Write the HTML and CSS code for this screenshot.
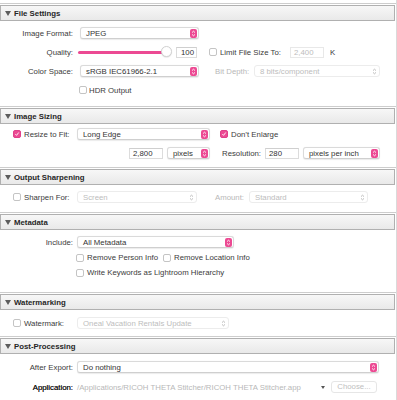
FILE: index.html
```html
<!DOCTYPE html>
<html lang="en">
<head>
    <meta charset="UTF-8">
    <title>Export Settings</title>
    <link rel="stylesheet" href="styles.css">
</head>
<body>
<div class="panel">

    <!-- File Settings -->
    <section class="section section--file">
        <div class="section__header"><span class="section__arrow"></span>File Settings</div>
        <div class="section__body">
            <div class="row">
                <span class="label">Image Format:</span>
                <div class="popup popup--format"><span>JPEG</span>
                    <svg class="stepper" viewBox="0 0 7 9"><rect width="7" height="9" rx="2"/><path d="M2 3.6 L3.5 2.2 L5 3.6 M2 5.4 L3.5 6.8 L5 5.4"/></svg>
                </div>
            </div>
            <div class="row">
                <span class="label">Quality:</span>
                <div class="slider"><div class="slider__track"></div><div class="slider__thumb"></div></div>
                <div class="field field--quality">100</div>
                <span class="check check--limit"></span>
                <span class="text text--limit">Limit File Size To:</span>
                <div class="field field--off field--limit">2,400</div>
                <span class="text">K</span>
            </div>
            <div class="row">
                <span class="label">Color Space:</span>
                <div class="popup popup--format"><span>sRGB IEC61966-2.1</span>
                    <svg class="stepper" viewBox="0 0 7 9"><rect width="7" height="9" rx="2"/><path d="M2 3.6 L3.5 2.2 L5 3.6 M2 5.4 L3.5 6.8 L5 5.4"/></svg>
                </div>
                <span class="text text--off text--depth">Bit Depth:</span>
                <div class="popup popup--off popup--depth"><span>8 bits/component</span>
                    <svg class="stepper stepper--off" viewBox="0 0 7 9"><rect width="7" height="9" rx="2"/><path d="M2 3.6 L3.5 2.2 L5 3.6 M2 5.4 L3.5 6.8 L5 5.4"/></svg>
                </div>
            </div>
            <div class="row">
                <span class="check check--hdr"></span>
                <span class="text">HDR Output</span>
            </div>
        </div>
    </section>

    <!-- Image Sizing -->
    <section class="section section--sizing">
        <div class="section__header"><span class="section__arrow"></span>Image Sizing</div>
        <div class="section__body">
            <div class="row">
                <span class="check check--on check--lead"><svg viewBox="0 0 8 8"><path d="M1.8 4.2 L3.4 5.8 L6.3 2"/></svg></span>
                <span class="text text--lead">Resize to Fit:</span>
                <div class="popup popup--edge"><span>Long Edge</span>
                    <svg class="stepper" viewBox="0 0 7 9"><rect width="7" height="9" rx="2"/><path d="M2 3.6 L3.5 2.2 L5 3.6 M2 5.4 L3.5 6.8 L5 5.4"/></svg>
                </div>
                <span class="check check--on check--enlarge"><svg viewBox="0 0 8 8"><path d="M1.8 4.2 L3.4 5.8 L6.3 2"/></svg></span>
                <span class="text">Don&rsquo;t Enlarge</span>
            </div>
            <div class="row">
                <div class="field field--size">2,800</div>
                <div class="popup popup--unit"><span>pixels</span>
                    <svg class="stepper" viewBox="0 0 7 9"><rect width="7" height="9" rx="2"/><path d="M2 3.6 L3.5 2.2 L5 3.6 M2 5.4 L3.5 6.8 L5 5.4"/></svg>
                </div>
                <span class="text text--res">Resolution:</span>
                <div class="field field--res">280</div>
                <div class="popup popup--ppi"><span>pixels per inch</span>
                    <svg class="stepper" viewBox="0 0 7 9"><rect width="7" height="9" rx="2"/><path d="M2 3.6 L3.5 2.2 L5 3.6 M2 5.4 L3.5 6.8 L5 5.4"/></svg>
                </div>
            </div>
        </div>
    </section>

    <!-- Output Sharpening -->
    <section class="section section--sharpen">
        <div class="section__header"><span class="section__arrow"></span>Output Sharpening</div>
        <div class="section__body">
            <div class="row">
                <span class="check check--lead"></span>
                <span class="text text--lead">Sharpen For:</span>
                <div class="popup popup--off popup--screen"><span>Screen</span>
                    <svg class="stepper stepper--off" viewBox="0 0 7 9"><rect width="7" height="9" rx="2"/><path d="M2 3.6 L3.5 2.2 L5 3.6 M2 5.4 L3.5 6.8 L5 5.4"/></svg>
                </div>
                <span class="text text--off text--amount">Amount:</span>
                <div class="popup popup--off popup--amount"><span>Standard</span>
                    <svg class="stepper stepper--off" viewBox="0 0 7 9"><rect width="7" height="9" rx="2"/><path d="M2 3.6 L3.5 2.2 L5 3.6 M2 5.4 L3.5 6.8 L5 5.4"/></svg>
                </div>
            </div>
        </div>
    </section>

    <!-- Metadata -->
    <section class="section section--meta">
        <div class="section__header"><span class="section__arrow"></span>Metadata</div>
        <div class="section__body">
            <div class="row">
                <span class="label">Include:</span>
                <div class="popup popup--include"><span>All Metadata</span>
                    <svg class="stepper" viewBox="0 0 7 9"><rect width="7" height="9" rx="2"/><path d="M2 3.6 L3.5 2.2 L5 3.6 M2 5.4 L3.5 6.8 L5 5.4"/></svg>
                </div>
            </div>
            <div class="row row--short">
                <span class="check check--meta"></span>
                <span class="text text--person">Remove Person Info</span>
                <span class="check"></span>
                <span class="text">Remove Location Info</span>
            </div>
            <div class="row row--short">
                <span class="check check--meta"></span>
                <span class="text">Write Keywords as Lightroom Hierarchy</span>
            </div>
        </div>
    </section>

    <!-- Watermarking -->
    <section class="section section--mark">
        <div class="section__header"><span class="section__arrow"></span>Watermarking</div>
        <div class="section__body">
            <div class="row">
                <span class="check check--lead"></span>
                <span class="text text--lead">Watermark:</span>
                <div class="popup popup--off popup--mark"><span>Oneal Vacation Rentals Update</span>
                    <svg class="stepper stepper--off" viewBox="0 0 7 9"><rect width="7" height="9" rx="2"/><path d="M2 3.6 L3.5 2.2 L5 3.6 M2 5.4 L3.5 6.8 L5 5.4"/></svg>
                </div>
            </div>
        </div>
    </section>

    <!-- Post-Processing -->
    <section class="section section--post">
        <div class="section__header"><span class="section__arrow"></span>Post-Processing</div>
        <div class="section__body">
            <div class="row">
                <span class="label">After Export:</span>
                <div class="popup popup--after"><span>Do nothing</span>
                    <svg class="stepper" viewBox="0 0 7 9"><rect width="7" height="9" rx="2"/><path d="M2 3.6 L3.5 2.2 L5 3.6 M2 5.4 L3.5 6.8 L5 5.4"/></svg>
                </div>
            </div>
            <div class="row">
                <span class="label label--strong">Application:</span>
                <span class="text text--off text--path">/Applications/RICOH THETA Stitcher/RICOH THETA Stitcher.app</span>
                <span class="drop-arrow"></span>
                <div class="button button--off">Choose...</div>
            </div>
        </div>
    </section>

</div>
</body>
</html>
```

FILE: styles.css
```css
body, html {
    margin: 0;
    background-color: #fff;
}

.panel {
    box-sizing: border-box;
    width: 397px;
    height: 400px;
    padding-top: 3px;
    border-right: 1px solid #dadada;
    font-family: "Liberation Sans", Arial, sans-serif;
    font-size: 7.8px;
    color: #3b3b3b;
    overflow: hidden;
}

.section {
    border-top: 1px solid #cdcdcd;
}

.section__header {
    display: flex;
    align-items: center;
    box-sizing: border-box;
    height: 16px;
    margin: 1px 1px 0 0;
    border: 1px solid #b0b0b0;
    background: linear-gradient(#f7f7f7, #e9e9e9);
    font-weight: bold;
    color: #262626;
}

.section__arrow {
    width: 0;
    height: 0;
    margin: 1px 3px 0 4px;
    border-left: 3.5px solid transparent;
    border-right: 3.5px solid transparent;
    border-top: 5px solid #5c5c5c;
}

.section__body {
    display: flex;
    flex-direction: column;
    gap: 3px;
}

.section--file .section__body { padding: 4px 0 8px; }
.section--sizing .section__body { padding: 2px 0 6px; }
.section--sharpen .section__body { padding: 4px 0 7px; }
.section--meta .section__body { padding: 4px 0 12px; gap: 0; }
.section--mark .section__body { padding: 5px 0 5px; }
.section--post .section__body { padding: 5px 0 5px; gap: 4px; }

.row {
    display: flex;
    align-items: center;
    height: 16px;
    white-space: nowrap;
}

.row--short {
    height: 15px;
}

.label {
    width: 73px;
    margin-right: 4px;
    text-align: right;
    flex-shrink: 0;
}

.section--file .label {
    margin-right: 7px;
}

.label--strong {
    color: #222;
    text-shadow: 0 0 0.3px #222;
}

.text {
    flex-shrink: 0;
}

.text--off {
    color: #b8b8b8;
}

/* popup buttons */
.popup {
    display: flex;
    align-items: center;
    justify-content: space-between;
    box-sizing: border-box;
    height: 12px;
    padding: 0 1px 0 5px;
    background-color: #fff;
    border: 1px solid #dadada;
    border-bottom-color: #cfcfcf;
    border-radius: 3px;
    box-shadow: 0 0.5px 1px rgba(0, 0, 0, 0.08);
    color: #333;
    flex-shrink: 0;
}

.popup--off {
    border-color: #ececec;
    box-shadow: none;
    color: #bdbdbd;
}

.stepper {
    width: 7px;
    height: 9px;
}

.stepper rect {
    fill: #ec4a93;
}

.stepper path {
    fill: none;
    stroke: #fff;
    stroke-width: 0.9;
}

.stepper--off rect {
    fill: none;
}

.stepper--off path {
    stroke: #b3b3b3;
}

.popup--format { width: 119px; }
.popup--depth { width: 126px; margin-left: 4px; }
.popup--edge { width: 133px; }
.popup--unit { width: 43px; margin-left: 4px; }
.popup--ppi { width: 77px; margin-left: 4px; }
.popup--screen { width: 120px; }
.popup--amount { width: 119px; margin-left: 4px; }
.popup--include { width: 157px; }
.popup--mark { width: 152px; }
.popup--after { width: 302px; }

/* text fields */
.field {
    box-sizing: border-box;
    height: 11px;
    line-height: 9px;
    padding: 0 3px;
    background-color: #fff;
    border: 1px solid #dcdcdc;
    border-top-color: #cfcfcf;
    color: #333;
    flex-shrink: 0;
}

.field--off {
    border-color: #e8e8e8;
    color: #bdbdbd;
}

.field--quality { width: 21px; margin-left: 4px; text-align: right; padding-right: 2px; }
.field--limit { width: 34px; margin-right: 6px; }
.field--size { width: 34px; margin-left: 129px; }
.field--res { width: 34px; }

/* checkboxes */
.check {
    display: flex;
    align-items: center;
    justify-content: center;
    box-sizing: border-box;
    width: 8px;
    height: 8px;
    margin-right: 3px;
    background-color: #fff;
    border: 1px solid #c4c4c4;
    border-radius: 2px;
    flex-shrink: 0;
}

.check--on {
    background-color: #ec4a93;
    border-color: #e0408a;
}

.check--on svg {
    width: 8px;
    height: 8px;
}

.check--on path {
    fill: none;
    stroke: #fff;
    stroke-width: 1.2;
}

.check--limit { margin-left: 12px; }
.check--hdr { margin-left: 79px; margin-right: 2px; }
.check--lead { margin-left: 13px; }
.check--enlarge { margin-left: 10px; }
.check--meta { margin-left: 76px; }

.text--lead { width: 49px; margin-right: 4px; }
.text--limit { width: 60px; margin-right: 10px; }
.text--depth { width: 35px; margin-left: 16px; }
.text--res { width: 38px; margin-left: 12px; margin-right: 5px; }
.text--amount { width: 30px; margin-left: 18px; }
.text--person { width: 69px; margin-right: 7px; }
.text--path { width: 244px; }

/* quality slider */
.slider {
    position: relative;
    width: 94px;
    height: 12px;
    margin-left: -2px;
    flex-shrink: 0;
}

.slider__track {
    position: absolute;
    left: 0;
    right: 6px;
    top: 5px;
    height: 3px;
    border-radius: 2px;
    background-color: #ec4a93;
}

.slider__thumb {
    position: absolute;
    right: 0;
    top: 0;
    box-sizing: border-box;
    width: 11px;
    height: 11px;
    border-radius: 50%;
    background-color: #fff;
    border: 1px solid #d2d2d2;
    box-shadow: 0 0.5px 1px rgba(0, 0, 0, 0.15);
}

/* application chooser */
.drop-arrow {
    width: 0;
    height: 0;
    margin-right: 6px;
    border-left: 2.5px solid transparent;
    border-right: 2.5px solid transparent;
    border-top: 3.5px solid #555;
}

.button {
    box-sizing: border-box;
    width: 46px;
    height: 12px;
    line-height: 10px;
    text-align: center;
    background-color: #fff;
    border: 1px solid #e6e6e6;
    border-radius: 3px;
}

.button--off {
    color: #c0c0c0;
}
```
